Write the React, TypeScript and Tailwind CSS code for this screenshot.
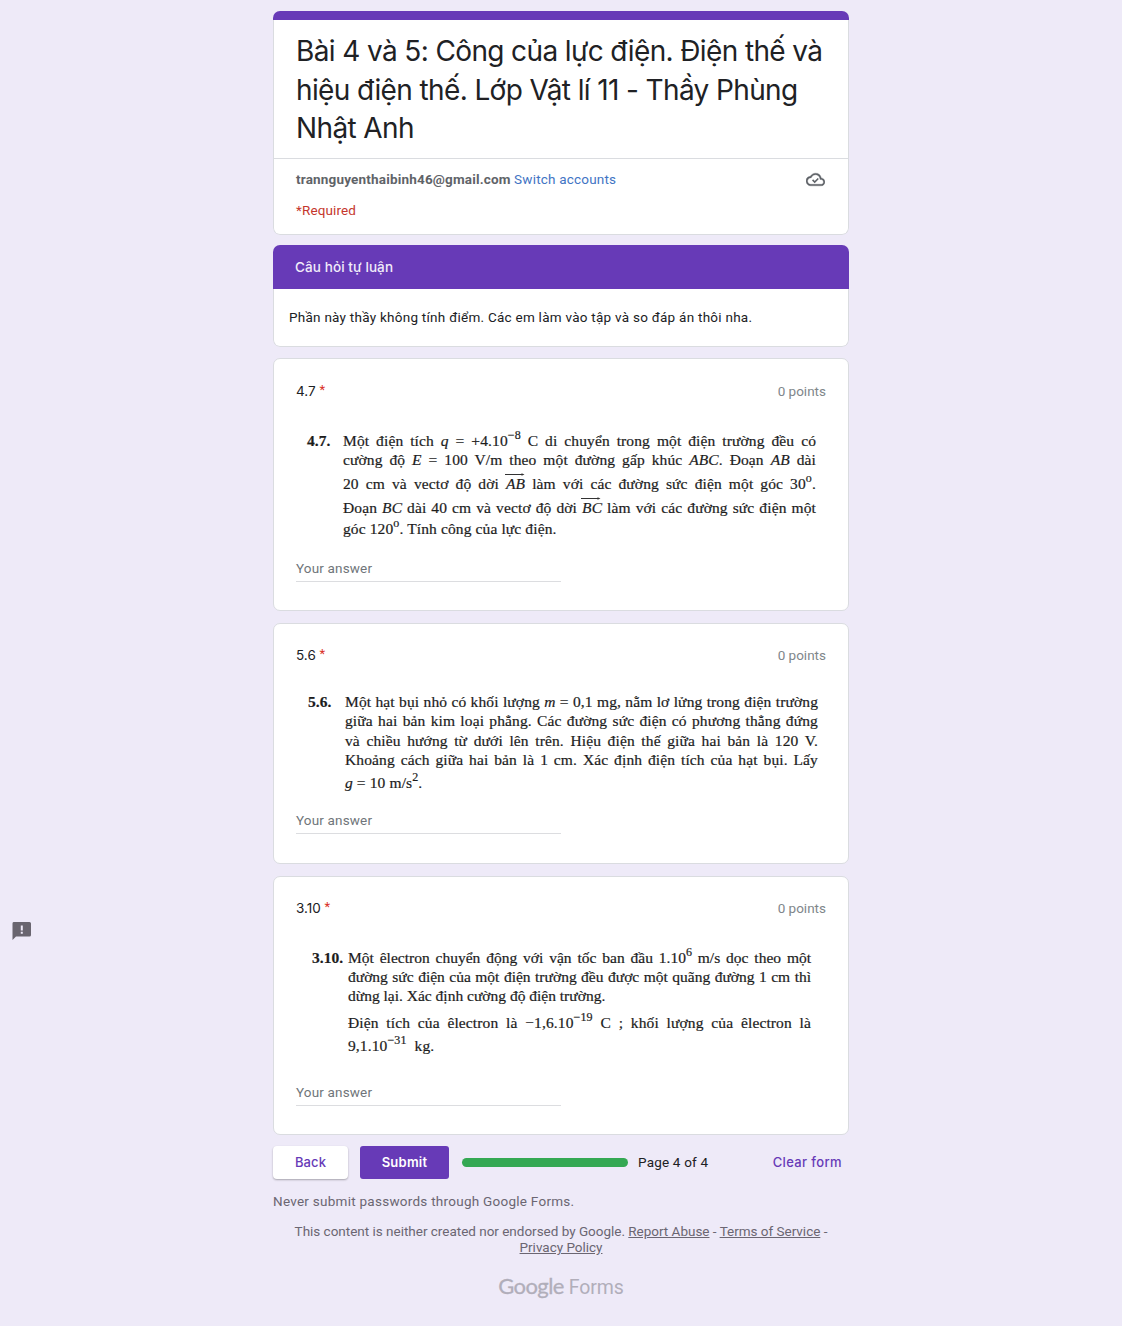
import React from "react";

type LineProps = { children: React.ReactNode; className?: string; ragged?: boolean };

/** One line of a printed exercise, spread over the column unless ragged. */
function Line({ children, className = "", ragged = false }: LineProps) {
  return (
    <div
      className={`h-5 whitespace-nowrap leading-5 ${ragged ? "" : "[text-align-last:justify]"} ${className}`}
    >
      {children}
    </div>
  );
}

function Sup({ children }: { children: React.ReactNode }) {
  return <span className="relative -top-[7px] text-[12px] leading-none">{children}</span>;
}

function Vec({ children }: { children: string }) {
  return (
    <span className="relative inline-block italic leading-5">
      {children}
      <svg className="absolute -left-px -top-[2px] h-[5px] w-[20px]" viewBox="0 0 20 5">
        <path d="M0 2.5H17" stroke="#333" strokeWidth="1" />
        <path d="M16.5 1.2 19.5 2.5 16.5 3.8Z" fill="#333" />
      </svg>
    </span>
  );
}

type QuestionProps = {
  title: string;
  height: string;
  head: string;
  body: string;
  foot: string;
  children: React.ReactNode;
};

function Question({ title, height, head, body, foot, children }: QuestionProps) {
  return (
    <section
      className={`mb-3 flex flex-col rounded-[7px] border border-[#dadce0] bg-white px-[22px] ${height}`}
    >
      <div className={`flex h-5 justify-between ${head}`}>
        <h2 className="font-['Inter'] text-[13.5px] leading-5 text-[#202124]">
          {title}{" "}
          <span className="relative -top-[2px] font-['Roboto'] text-[13px] text-[#d93025]">*</span>
        </h2>
        <span className="text-[13.5px] leading-5 text-[#80868b]">0 points</span>
      </div>
      <div
        className={`flex font-['Liberation_Serif'] text-[15.5px] text-[#1c1c1c] [-webkit-text-stroke:0.2px_#1c1c1c] ${body}`}
      >
        {children}
      </div>
      <div
        className={`mt-auto h-[23px] w-[265px] border-b border-[#dcdde0] text-[13.5px] leading-[18px] tracking-[0.16px] text-[#70757a] ${foot}`}
      >
        Your answer
      </div>
    </section>
  );
}

export default function App() {
  return (
    <div className="relative h-[1326px] w-full overflow-hidden bg-[#eeeaf8] font-['Roboto'] text-[#202124]">
      <main className="mx-auto w-[576px] pt-[11px]">
        <header className="mb-[10px] h-[224px] overflow-hidden rounded-[7px]">
          <div className="h-[9px] bg-[#673ab7]" />
          <div className="h-[215px] rounded-b-[7px] border border-t-0 border-[#dadce0] bg-white">
            <h1 className="h-[139px] whitespace-nowrap border-b border-[#dadce0] pl-[22px] pt-[12px] font-['Inter'] text-[28px] leading-[38.5px] tracking-[-0.62px]">
              Bài 4 và 5: Công của lực điện. Điện thế và
              <br />
              hiệu điện thế. Lớp Vật lí 11 - Thầy Phùng
              <br />
              Nhật Anh
            </h1>
            <div className="flex items-center justify-between pl-[22px] pr-[23px] pt-[10px]">
              <p className="text-[13.5px] leading-5">
                <b className="tracking-[0.18px] text-[#5f6368]">trannguyenthaibinh46@gmail.com</b>{" "}
                <a className="tracking-[0.2px] text-[#4274c4]">Switch accounts</a>
              </p>
              <svg className="h-[19px] w-[19px]" viewBox="0 0 24 24" fill="#5f6368">
                <path d="M19.35 10.04A7.49 7.49 0 0 0 12 4C9.11 4 6.6 5.64 5.35 8.04A5.994 5.994 0 0 0 0 14c0 3.31 2.69 6 6 6h13c2.76 0 5-2.24 5-5 0-2.64-2.05-4.78-4.65-4.96zM19 18H6c-2.21 0-4-1.79-4-4 0-2.05 1.53-3.76 3.56-3.97l1.07-.11.5-.95A5.469 5.469 0 0 1 12 6c2.62 0 4.88 1.86 5.39 4.43l.3 1.5 1.53.11A2.98 2.98 0 0 1 22 15c0 1.65-1.35 3-3 3z" stroke="#5f6368" strokeWidth=".4" />
                <path d="M8.3 12.5 11 15.2 15.5 10.7" fill="none" stroke="#5f6368" strokeWidth="2" />
              </svg>
            </div>
            <p className="mt-[11px] pl-[22px] text-[13.5px] leading-5 tracking-[0.13px] text-[#c5362d]">
              *Required
            </p>
          </div>
        </header>

        <section className="mb-[11px] h-[102px] overflow-hidden rounded-[7px]">
          <h2 className="h-11 bg-[#673ab7] pl-[22px] font-['Inter'] text-[13.5px] font-medium leading-[44px] tracking-[0.1px] text-[#f1ecfa]">
            Câu hỏi tự luận
          </h2>
          <div className="h-[58px] rounded-b-[7px] border border-t-0 border-[#dadce0] bg-white">
            <p className="pl-[15px] pt-[18px] text-[13.5px] leading-5 tracking-[0.256px]">
              Phần này thầy không tính điểm. Các em làm vào tập và so đáp án thôi nha.
            </p>
          </div>
        </section>

        <Question
          title="4.7"
          height="h-[253px]"
          head="mt-[22px]"
          body="mt-[30px] pl-[11px]"
          foot="mb-[28px]"
        >
          <b className="w-[36px] shrink-0 leading-5">4.7.</b>
          <div className="w-[473px] tracking-[0.12px]">
            <Line>
              Một điện tích <i>q</i> = +4.10<Sup>−8</Sup> C di chuyển trong một điện trường đều có
            </Line>
            <Line className="-mt-px">
              cường độ <i>E</i> = 100 V/m theo một đường gấp khúc <i>ABC</i>. Đoạn <i>AB</i> dài
            </Line>
            <Line className="mt-[4px]">
              20 cm và vectơ độ dời <Vec>AB</Vec> làm với các đường sức điện một góc 30<Sup>o</Sup>.
            </Line>
            <Line className="mt-[4px]">
              Đoạn <i>BC</i> dài 40 cm và vectơ độ dời <Vec>BC</Vec> làm với các đường sức điện một
            </Line>
            <Line ragged className="mt-px">
              góc 120<Sup>o</Sup>. Tính công của lực điện.
            </Line>
          </div>
        </Question>

        <Question
          title="5.6"
          height="h-[241px]"
          head="mt-[21px]"
          body="mt-[27px] pl-[12px]"
          foot="mb-[29px]"
        >
          <b className="w-[37px] shrink-0 leading-5">5.6.</b>
          <div className="w-[473px] tracking-[0.12px]">
            <Line>
              Một hạt bụi nhỏ có khối lượng <i>m</i> = 0,1 mg, nằm lơ lửng trong điện trường
            </Line>
            <Line className="-mt-px">
              giữa hai bản kim loại phẳng. Các đường sức điện có phương thẳng đứng
            </Line>
            <Line>và chiều hướng từ dưới lên trên. Hiệu điện thế giữa hai bản là 120 V.</Line>
            <Line className="-mt-px">
              Khoảng cách giữa hai bản là 1 cm. Xác định điện tích của hạt bụi. Lấy
            </Line>
            <Line ragged className="mt-[3px]">
              <i>g</i> = 10 m/s<Sup>2</Sup>.
            </Line>
          </div>
        </Question>

        <Question
          title="3.10"
          height="h-[259px]"
          head="mt-[21px]"
          body="mt-[30px] pl-[16px]"
          foot="mb-[28px]"
        >
          <b className="w-[36px] shrink-0 leading-5">3.10.</b>
          <div className="w-[463px]">
            <Line>
              Một êlectron chuyển động với vận tốc ban đầu 1.10<Sup>6</Sup> m/s dọc theo một
            </Line>
            <Line className="-mt-px">
              đường sức điện của một điện trường đều được một quãng đường 1 cm thì
            </Line>
            <Line ragged className="-mt-px">
              dừng lại. Xác định cường độ điện trường.
            </Line>
            <Line className="mt-[7px] tracking-[0.12px]">
              Điện tích của êlectron là −1,6.10<Sup>−19</Sup> C ; khối lượng của êlectron là
            </Line>
            <Line ragged className="mt-[3px] tracking-[0.12px]">
              9,1.10<Sup>−31</Sup>&nbsp; kg.
            </Line>
          </div>
        </Question>

        <div className="-mt-px flex h-[33px] items-center font-['Inter'] text-[13px]">
          <button className="h-[33px] w-[75px] rounded-[4px] bg-white pt-px font-medium tracking-[0.1px] text-[#673ab7] shadow-[0_1px_2px_rgba(0,0,0,0.3)]">
            Back
          </button>
          <button className="ml-3 h-[33px] w-[89px] rounded-[3px] bg-[#673ab7] pt-px font-semibold tracking-[0.25px] text-white">
            Submit
          </button>
          <div className="ml-[13px] h-[9px] w-[166px] rounded-full bg-[#34a853]" />
          <span className="ml-[10px] font-['Roboto'] text-[13.5px] tracking-[0.19px]">Page 4 of 4</span>
          <a className="ml-auto mr-[7px] pt-px font-medium tracking-[0.37px] text-[#673ab7]">
            Clear form
          </a>
        </div>

        <footer className="text-[13.5px] text-[#6b6672]">
          <p className="mt-[12px] leading-5 tracking-[0.26px]">
            Never submit passwords through Google Forms.
          </p>
          <p className="mt-[12px] whitespace-nowrap text-center leading-4 tracking-[-0.015px]">
            This content is neither created nor endorsed by Google. <u>Report Abuse</u> -{" "}
            <u>Terms of Service</u> -
            <br />
            <u>Privacy Policy</u>
          </p>
          <div className="mt-[17px] flex items-baseline justify-center gap-[5px] leading-7 text-[#b1aeba]">
            <span className="font-['Lato'] text-[22px] tracking-[-0.6px] [-webkit-text-stroke:0.3px_#b1aeba]">
              Google
            </span>
            <span className="text-[19.5px] tracking-[-0.1px]">Forms</span>
          </div>
        </footer>
      </main>

      <svg className="absolute left-[12px] top-[922px] h-[18px] w-[19px]" viewBox="0 0 19 18">
        <path d="M1.5 0H17.5Q19 0 19 1.5V13Q19 14.5 17.5 14.5H4L.5 18V1.5Q.5 0 1.5 0Z" fill="#69656f" />
        <path d="M8.8 3.5h2v5h-2zM8.8 9.7h2v2h-2z" fill="#eeeaf8" />
      </svg>
    </div>
  );
}
